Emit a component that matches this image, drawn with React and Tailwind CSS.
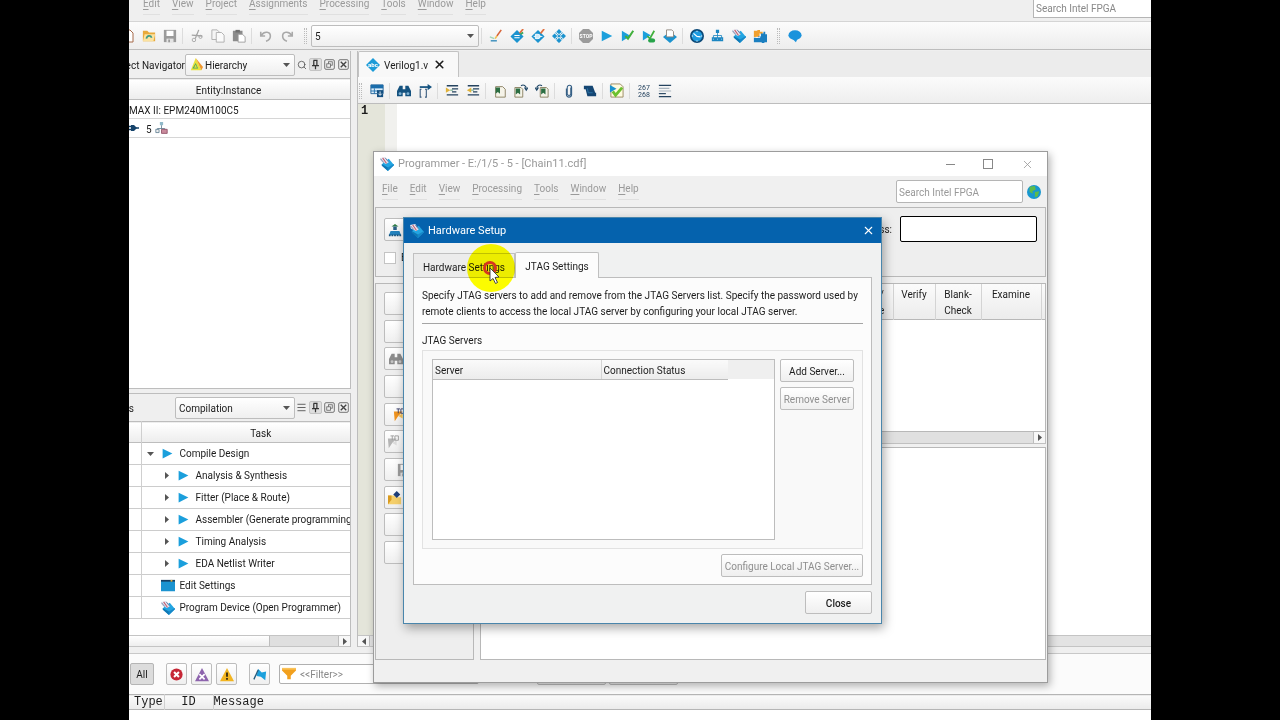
import { Menu, Search, X } from 'lucide-react';

const UI_FONT = 'font-[Roboto,"Noto_Sans",sans-serif]';
const BTN = 'rounded-xs border border-[#bdbdbd] bg-linear-to-b from-white to-[#efefef] pt-px';

/* ---------- icons ---------- */

function Svg({ children, size = 14 }) {
    return <svg width={size} height={size} viewBox="0 0 16 16" fill="none" className="shrink-0">{children}</svg>;
}

const Play = ({ size = 14 }) => <Svg size={size}><path d="M2 2 L14 8 L2 14Z" fill="#1b9fdc" /></Svg>;
const Down = () => <svg width="7" height="4" viewBox="0 0 7 4"><path d="M0 0H7L3.5 4Z" fill="#555" /></svg>;
const ArrowR = () => <svg width="4" height="7" viewBox="0 0 4 7" className="shrink-0"><path d="M0 0V7L4 3.5Z" fill="#555" /></svg>;
const ArrowL = () => <svg width="4" height="7" viewBox="0 0 4 7"><path d="M4 0V7L0 3.5Z" fill="#555" /></svg>;

const ChipLogo = ({ size = 14 }) => (
    <Svg size={size}>
        <path d="M10 2L16 9L9 16L2 9L4 6Z" fill="#23a5e2" />
        <path d="M2 8L9 12V16L2 10Z" fill="#0f78b5" />
        <path d="M9 12L16 8V9.500L9 16Z" fill="#1788c8" />
        <path d="M0 1L6 0L10 6L7 8L1 5Z" fill="#e4e8f2" />
        <path d="M3 1L7.500 7.500" stroke="#c65a6a" strokeWidth="1.200" />
        <path d="M0.500 2L4.500 6.500M6 1L9.500 5.500" stroke="#66709a" strokeWidth="1" />
    </Svg>
);
const NewDoc = () => (
    <svg width="8" height="14" viewBox="0 0 8 14"><path d="M0 1H1L4 4V13H0" fill="#fff" stroke="#a66a4a" /></svg>
);
const Open = () => (
    <Svg>
        <path d="M1 2H6L8 4H15V14H1Z" fill="#e8a93a" />
        <path d="M3 6H15L13 14H1Z" fill="#fbe2a0" />
        <path d="M5 11C6 7 10 7 11 10" stroke="#3d9a86" strokeWidth="2" />
    </Svg>
);
const Save = ({ color = '#9b9b9b' }) => (
    <Svg><path d="M1 1H15V15H1Z" fill={color} /><path d="M4 2H12V8H4Z" fill="#fff" /><path d="M4 11H12V15H4Z" fill="#e4e4e4" /><path d="M6 12H8V15H6Z" fill={color} /></Svg>
);
const Cut = () => (
    <Svg><path d="M10 1L6 11M2 7L14 8" stroke="#a4a4a4" strokeWidth="1.5" /><circle cx="4.500" cy="12.500" r="2" stroke="#a4a4a4" /><circle cx="12" cy="9" r="1.800" stroke="#a4a4a4" /></Svg>
);
const Copy = () => (
    <Svg><path d="M1 1H7L9 3V12H1Z" fill="#f5f5f5" stroke="#aaa" /><path d="M6 4H12L15 7V15H6Z" fill="#fafafa" stroke="#aaa" /></Svg>
);
const Paste = () => (
    <Svg><path d="M1 2H12V14H1Z" fill="#8b8b8b" /><path d="M4 1H9V4H4Z" fill="#6f6f6f" /><path d="M7 6H12L15 9V15H7Z" fill="#fff" stroke="#999" /></Svg>
);
const Undo = () => <Svg><path d="M2 3V8H7M3 7C6 2 13 3 13 8C13 11 11 13 8 14" stroke="#a9a9a9" strokeWidth="1.800" /></Svg>;
const Redo = () => <Svg><path d="M14 3V8H9M13 7C10 2 3 3 3 8C3 11 5 13 8 14" stroke="#a9a9a9" strokeWidth="1.800" /></Svg>;
const Pencil = () => (
    <Svg><path d="M14 1L9 8" stroke="#d8653a" strokeWidth="1.800" /><path d="M9 8L7 11" stroke="#f2c14b" strokeWidth="1.800" /><path d="M1 9L6 11" stroke="#9fd4b8" strokeWidth="1.500" /><path d="M2 13.500H9" stroke="#2c86b8" strokeWidth="1.500" /></Svg>
);
const Diamond = ({ children }) => <Svg><path d="M8 1L15.500 8.500L8 16L0.500 8.500Z" fill="#1b93cf" />{children}</Svg>;
const DiamondEq = () => (
    <Diamond><path d="M5 7.500H11M5 10H11" stroke="#fff" strokeWidth="1.200" /><path d="M15 0L11 5" stroke="#e2703f" strokeWidth="2" /><path d="M12 6L15 4" stroke="#3aa65a" strokeWidth="2" /></Diamond>
);
const DiamondGate = () => (
    <Diamond><path d="M5 6H8A2.500 2.500 0 0 1 8 11H5Z" stroke="#fff" fill="#cdeafa" /><path d="M3 8.500H5M10 8.500H13" stroke="#fff" /><path d="M15 0L11 5" stroke="#e2703f" strokeWidth="2" /></Diamond>
);
const DiamondGrid = () => (
    <Svg>
        <path d="M8 0L11 3L8 6L5 3ZM8 10L11 13L8 16L5 13ZM3 5L6 8L3 11L0 8ZM13 5L16 8L13 11L10 8ZM8 6.500L9.500 8L8 9.500L6.500 8Z" fill="#1b93cf" />
        <path d="M4 4L12 12M12 4L4 12" stroke="#1b93cf" strokeWidth="1.200" strokeDasharray="2 1" />
    </Svg>
);
const Stop = () => (
    <Svg size={16}>
        <path d="M5 1H11L15 5V11L11 15H5L1 11V5Z" fill="#9b9b9b" />
        <text x="8" y="10" textAnchor="middle" fontSize="5" fontWeight="700" fontFamily="Roboto" fill="#fff">STOP</text>
    </Svg>
);
const PlayCheck = () => <Svg><path d="M1 2L11 8L1 14Z" fill="#1b9fdc" /><path d="M5 8L8 11L14 2" stroke="#41b03c" strokeWidth="2.300" /></Svg>;
const PlayDown = () => <Svg><path d="M1 2L10 7L1 13Z" fill="#1b9fdc" /><path d="M6 8L9 11L14 2" stroke="#41b03c" strokeWidth="2" /><ellipse cx="11" cy="13" rx="4" ry="2.500" fill="#27a34a" /></Svg>;
const DocDiamond = () => (
    <Svg><path d="M0 9L8 16L16 9L12 6H4Z" fill="#1b93cf" /><path d="M4 1H10L12 3V9H4Z" fill="#fff" stroke="#8a8178" /></Svg>
);
const Clock = () => (
    <Svg><circle cx="8" cy="8" r="7" fill="#1d9be0" stroke="#0d4a78" strokeWidth="2" /><path d="M4 5L8 8.500L12 9" stroke="#fff" strokeWidth="1.300" /><path d="M8 2V3.500M8 13V14.500M2 8H3.500M12.500 8H14" stroke="#fff" /></Svg>
);
const Net = () => (
    <Svg size={13}><path d="M6 1H10V5H6ZM1 10H6V15H1ZM6 10H10V15H6ZM10 10H15V15H10Z" fill="#1b86c2" /><path d="M8 5V11M3 11V8H13V11" stroke="#1b86c2" /><path d="M3 12V13M8 12V13M13 12V13" stroke="#d8edf8" /></Svg>
);
const Puzzle = () => (
    <Svg><path d="M1 2H5V1H8V3H11V6H8V9H1Z" fill="#f0a030" /><path d="M1 10H6V8H9V5H12V3H14V6H16V15H13V16H10V15H1Z" fill="#1b7fc0" /><path d="M8 5V9.500H3" stroke="#fff" strokeWidth="1" /></Svg>
);
const Chat = () => <Svg><ellipse cx="8" cy="7" rx="7.500" ry="5.500" fill="#1b93dc" /><path d="M5 11H11L9 15Z" fill="#1b93dc" /></Svg>;

const WindowIcon = () => (
    <Svg><path d="M1 1H15V11H1Z" fill="#dceefa" stroke="#1a5d92" /><path d="M1 1H15V5H1Z" fill="#1a6dab" /><path d="M1 8H9M5 5V11" stroke="#1a6dab" /><path d="M8 7H15V15H8Z" fill="#134f80" /><path d="M11.500 8.500V12.500M9.500 11L11.500 13L13.500 11" stroke="#fff" /></Svg>
);
const Binoculars = ({ color = '#14527f', lens = '#7fb2d4' }) => (
    <Svg><path d="M3 2H6.500V6H9.500V2H13L16 8V14H9.500V10H6.500V14H0V8Z" fill={color} /><circle cx="3.500" cy="11" r="1.700" fill={lens} /><circle cx="12.500" cy="11" r="1.700" fill={lens} /></Svg>
);
const GoTo = () => <Svg><path d="M4 6H2.500V15H4M8 6H9.500V15H8" stroke="#33567a" strokeWidth="1.200" /><path d="M2 3.500H12" stroke="#14527f" strokeWidth="2" /><path d="M11 0L16 3.500L11 7Z" fill="#14527f" /></Svg>;
const Indent = ({ flip = false }) => (
    <Svg><path d="M2 2H15M8 5.500H15M8 9H13M2 12.500H15" stroke="#25435f" strokeWidth="1.500" /><path d={flip ? 'M6 4L1 7L6 10Z' : 'M1 4L6 7L1 10Z'} fill="#e0b23a" /><path d="M6 7H9" stroke="#4b9a6a" /></Svg>
);
const Bookmark = () => <Svg><path d="M3 3H11L14 6V15H3Z" fill="#f5f3e8" stroke="#857a5a" /><path d="M3 4H8V11L5.500 9L3 11Z" fill="#2c6e42" /></Svg>;
const BookmarkTurn = ({ flip = false }) => (
    <Svg>
        <g transform={flip ? 'translate(5 0)' : undefined}><path d="M1 4H8L10 6V15H1Z" fill="#f5f3e8" stroke="#857a5a" /><path d="M2 5H7V12L4.500 10L2 12Z" fill="#2c6e42" /></g>
        <path d={flip ? 'M8 2C5 0 2 2 2 5M0 4L2 7L4 4' : 'M8 2C11 0 14 2 14 5M12 4L14 7L16 4'} stroke="#1f4767" strokeWidth="1.300" />
    </Svg>
);
const Clip = () => <Svg><path d="M10 4V11A2 2 0 0 1 6 11V4A2.500 2.500 0 0 1 11 4V12A3 3 0 0 1 5 12V5" stroke="#355f85" strokeWidth="1.200" /></Svg>;
const Scroll = () => <Svg><path d="M1 2H11L14 10H15V14H5L3 6H1Z" fill="#154673" /><path d="M5 5L6 10H11" stroke="#2d78ad" /></Svg>;
const CheckDoc = () => <Svg size={15}><path d="M2 1H12L15 4V15H2Z" fill="#fffbe0" stroke="#9a8a62" /><path d="M1 2L8 6L1 10Z" fill="#1b93cf" /><path d="M4 9L7 13L14 5" stroke="#6cc12e" strokeWidth="3" /></Svg>;
const Lines = () => <Svg><path d="M1 1.500H15M1 14.500H15" stroke="#25435f" strokeWidth="1.500" /><path d="M1 5H13M1 8H15" stroke="#a9b5bf" strokeWidth="1.300" /><path d="M1 11H9" stroke="#25435f" strokeWidth="1.300" /></Svg>;
const LineNumbers = () => (
    <Svg size={16}>
        <g fontFamily="Roboto" fontSize="7" fill="#25435f" textAnchor="middle"><text x="8" y="7">267</text><text x="8" y="14">268</text></g>
    </Svg>
);
const Abc = () => (
    <Svg><path d="M8 0L16 8L8 16L0 8Z" fill="#1b9bd8" /><text x="8" y="10" textAnchor="middle" fontSize="7" fontWeight="700" fontFamily="Roboto" fill="#fff">abc</text></Svg>
);
const Triangle = () => <Svg size={13}><path d="M7 0L14 15H1Z" fill="#e7e23c" /><path d="M7 0L16 11L14 15Z" fill="#f0962c" /><path d="M7 6L10 13H3Z" fill="#4aa564" /><path d="M7 8L8.500 12H5Z" fill="#e7e23c" /></Svg>;
const PinIcon = () => <Svg size={11}><path d="M5 2H11M5.500 2V9M10 2V9M3 9.500H13M8 10V15" stroke="#333" strokeWidth="1.800" /></Svg>;
const Restore = () => <Svg size={11}><rect x="1" y="1" width="14" height="14" rx="2" stroke="#666" strokeWidth="1.300" /><rect x="6.500" y="4" width="5.500" height="5" stroke="#666" strokeWidth="1.200" /><rect x="4" y="7" width="5.500" height="5" fill="#eee" stroke="#666" strokeWidth="1.200" /></Svg>;
const BoxX = () => <Svg size={11}><rect x="1" y="1" width="14" height="14" rx="2" stroke="#666" strokeWidth="1.300" /><path d="M4 4L12 12M12 4L4 12" stroke="#444" strokeWidth="2" /></Svg>;
const Hier = () => <Svg size={13}><path d="M6 0H10V4H6Z" fill="#8fb9c9" /><path d="M8 4V8M3 10V8H12V10" stroke="#5c7d90" /><path d="M1 9H5V13H1Z" fill="#eee" stroke="#5c7d90" /><path d="M8 9H15V14H8Z" fill="#c98a9c" stroke="#8a4a60" /></Svg>;
const Plug = () => <svg width="10" height="8" viewBox="0 0 10 8"><path d="M0 2.500H3M0 5.500H3M7 4H10" stroke="#15436b" strokeWidth="1.500" /><path d="M2 1H5L8 4L5 7H2Z" fill="#15436b" /></svg>;
const EditWin = () => <Svg><path d="M0 2H16V14H0Z" fill="#1b93d0" /><path d="M0 1H16V3H0Z" fill="#163f63" /><path d="M11 1H13V3H11Z" fill="#e9b33c" /></Svg>;
const ErrorIcon = () => <Svg size={13}><circle cx="8" cy="8" r="7.500" fill="#c62736" /><path d="M5 5L11 11M11 5L5 11" stroke="#fff" strokeWidth="2.500" /></Svg>;
const CritIcon = () => <Svg><path d="M8 0L16 15H0Z" fill="#8d63ad" /><path d="M5 7L11 13M11 7L5 13" stroke="#fff" strokeWidth="2" /></Svg>;
const WarnIcon = () => <Svg><path d="M8 0L16 15H0Z" fill="#f2b41f" /><path d="M8 5V10M8 11.500V13.500" stroke="#2d2410" strokeWidth="2" /></Svg>;
const FlagIcon = () => <Svg><path d="M6 1L10 5L15 4L14 14L9 10L4 9Z" fill="#1ba0dc" /><path d="M6 2L1 13" stroke="#235a7d" strokeWidth="1.500" /></Svg>;
const Funnel = () => <Svg><path d="M0 1H16V4L10 10V14H6V10L0 4Z" fill="#f2a01e" /><path d="M0 1H16V3H0Z" fill="#fac257" /></Svg>;
const Globe = () => <Svg size={14}><circle cx="8" cy="8" r="8" fill="#1897cf" /><path d="M3 2L9 1L10 5L6 7L7 10L3 8ZM9 8L14 7L12 13L9 14Z" fill="#5dbb4a" /></Svg>;
const Person = () => <Svg><path d="M8 1L12 4H4Z" fill="#2f7d46" /><path d="M6 4H10V8H6Z" fill="#2b5f86" /><path d="M1 14L3 9H13L15 14Z" fill="#2382bd" /><path d="M1 14H15" stroke="#15527d" strokeWidth="2" strokeDasharray="2 1" /></Svg>;
const FlagFile = ({ off = false }) => (
    <Svg><path d="M1 4L11 4L6 9L2 15Z" fill={off ? '#b5b5b5' : '#f0941f'} /><path d="M6 9L11 6V12Z" fill={off ? '#ddd' : '#f8c559'} /><path d="M4 1H8M6 1V6M9 1V6H13V1Z" stroke={off ? '#999' : '#333a68'} /></Svg>
);
const AddFile = () => <Svg><path d="M0 5H7L9 7H15V15H0Z" fill="#f5cf6a" /><path d="M0 5H4V10L0 15Z" fill="#d99a1f" /><path d="M10 0L14 4L10 8L6 4Z" fill="#1e3f7a" /></Svg>;

/* ---------- small parts ---------- */

const Tool = ({ label, children }) => (
    <button aria-label={label} className="flex h-5 w-[21px] shrink-0 items-center justify-center">{children}</button>
);
const Sep = () => <div className="mr-[3px] ml-0.5 h-4 w-px shrink-0 bg-[#dcdcdc]" />;
const Grip = () => <div className="mr-1 ml-[7px] h-4 w-[3px] shrink-0 border-x border-dotted border-[#bbb]" />;

function MenuBar({ items }) {
    return (
        <nav className="flex gap-3 text-[#9a9a9a]">
            {items.map(item => (
                <button key={item} className="border-b border-[#e0e0e0] pb-0.5 leading-4">
                    <span className="underline underline-offset-2">{item[0]}</span>{item.slice(1)}
                </button>
            ))}
        </nav>
    );
}

function Combo({ label, value, icon, className }) {
    return (
        <div className={`relative flex h-[22px] shrink-0 items-center ${className}`}>
            <select aria-label={label} className={`size-full appearance-none ${BTN} ${icon ? 'pl-[19px]' : 'pl-[3px]'}`}>
                <option>{value}</option>
            </select>
            {icon && <span className="pointer-events-none absolute left-[5px]">{icon}</span>}
            <span className="pointer-events-none absolute right-[5px]"><Down /></span>
        </div>
    );
}

function PanelButtons({ first }) {
    return (
        <div className="flex shrink-0 items-center gap-px">
            <button aria-label="Options" className="flex size-[13px] items-center justify-center text-[#555]">{first}</button>
            <button aria-label="Pin" className="flex size-[13px] items-center justify-center rounded-xs border border-[#c4c4c4] bg-[#dedede]"><PinIcon /></button>
            <button aria-label="Float" className="flex size-[13px] items-center justify-center"><Restore /></button>
            <button aria-label="Close panel" className="flex size-[13px] items-center justify-center"><BoxX /></button>
        </div>
    );
}

/* ---------- main window ---------- */

function MainToolbar() {
    return (
        <div className="flex h-[29px] shrink-0 items-center overflow-hidden border-y border-t-[#d5d5d5] border-b-[#bdbdbd] bg-linear-to-b from-[#fcfcfc] to-[#ededed]">
            <button aria-label="New" className="w-[9px] shrink-0"><NewDoc /></button>
            <Tool label="Open"><Open /></Tool>
            <Tool label="Save"><Save /></Tool>
            <Sep />
            <Tool label="Cut"><Cut /></Tool>
            <Tool label="Copy"><Copy /></Tool>
            <Tool label="Paste"><Paste /></Tool>
            <Sep />
            <Tool label="Undo"><Undo /></Tool>
            <Tool label="Redo"><Redo /></Tool>
            <Grip />
            <Combo label="Revision" value="5" className="w-[168px]" />
            <Sep />
            <Tool label="Assignment editor"><Pencil /></Tool>
            <Tool label="Settings"><DiamondEq /></Tool>
            <Tool label="Pin planner"><DiamondGate /></Tool>
            <Tool label="Chip planner"><DiamondGrid /></Tool>
            <Sep />
            <Tool label="Stop"><Stop /></Tool>
            <Tool label="Start compilation"><Play /></Tool>
            <Tool label="Start analysis"><PlayCheck /></Tool>
            <Tool label="Start fitter"><PlayDown /></Tool>
            <Tool label="Report"><DocDiamond /></Tool>
            <Sep />
            <Tool label="Timing analyzer"><Clock /></Tool>
            <Tool label="Netlist viewer"><Net /></Tool>
            <Tool label="Programmer"><ChipLogo /></Tool>
            <Tool label="Platform designer"><Puzzle /></Tool>
            <Grip />
            <Tool label="Feedback"><Chat /></Tool>
        </div>
    );
}

function ProjectNavigator() {
    return (
        <section className="flex h-[338px] shrink-0 flex-col border-r border-b border-[#bdbdbd]">
            <div className="flex h-[27px] shrink-0 items-center">
                <div className="flex min-w-0 flex-1 justify-end overflow-hidden pt-0.5 whitespace-nowrap">Project Navigator</div>
                <Combo label="View" value="Hierarchy" icon={<Triangle />} className="w-[110px]" />
                <PanelButtons first={<Search size={10} />} />
            </div>
            <div className="flex-1 bg-white">
                <table className="w-full border-collapse">
                    <thead>
                        <tr className="h-[21px] border-y border-[#bdbdbd] bg-linear-to-b from-white to-[#ededed]">
                            <th className="pt-0.5 pr-[22px] font-normal">Entity:Instance</th>
                        </tr>
                    </thead>
                    <tbody>
                        <tr className="h-[19px] border-b border-[#d6d6d6]"><td className="pt-0.5">MAX II: EPM240M100C5</td></tr>
                        <tr className="h-[19px] border-b border-[#d6d6d6]">
                            <td><div className="flex items-center"><Plug /><span className="pt-0.5 pr-[3px] pl-[7px]">5</span><Hier /></div></td>
                        </tr>
                    </tbody>
                </table>
            </div>
        </section>
    );
}

const tasks = [
    { name: 'Compile Design', level: 0, open: true },
    { name: 'Analysis & Synthesis', level: 1 },
    { name: 'Fitter (Place & Route)', level: 1 },
    { name: 'Assembler (Generate programming', level: 1 },
    { name: 'Timing Analysis', level: 1 },
    { name: 'EDA Netlist Writer', level: 1 },
    { name: 'Edit Settings', level: 0, icon: <EditWin /> },
    { name: 'Program Device (Open Programmer)', level: 0, icon: <ChipLogo /> },
];

function Tasks() {
    return (
        <section className="flex min-h-0 flex-1 flex-col border-t border-r border-[#bdbdbd]">
            <div className="flex h-[27px] shrink-0 items-center">
                <div className="flex min-w-0 flex-1 justify-end overflow-hidden pt-0.5 pr-[41px] whitespace-nowrap">Tasks</div>
                <Combo label="Flow" value="Compilation" className="w-[120px]" />
                <PanelButtons first={<Menu size={11} />} />
            </div>
            <div className="min-h-0 flex-1 overflow-hidden bg-white">
                <table className="w-full table-fixed border-collapse">
                    <thead>
                        <tr className="h-[21px] border-y border-[#bdbdbd] bg-linear-to-b from-white to-[#ededed]">
                            <th className="w-3 border-r border-[#cfcfcf]" aria-label="Status" />
                            <th className="pt-0.5 pl-[30px] font-normal">Task</th>
                        </tr>
                    </thead>
                    <tbody>
                        {tasks.map(t => (
                            <tr key={t.name} className="h-[22px] border-b border-[#cccccc]">
                                <td className="border-r border-[#cfcfcf]" />
                                <td className="overflow-hidden whitespace-nowrap">
                                    <div className={`flex items-center ${t.level ? 'pl-[23px]' : 'pl-[5px]'}`}>
                                        <span className={t.level ? 'w-3 shrink-0' : 'w-[14px] shrink-0'}>{t.open ? <Down /> : t.level ? <ArrowR /> : null}</span>
                                        {t.icon || <Play size={13} />}
                                        <span className={t.icon ? 'pl-[5px]' : 'pl-[6px]'}>{t.name}</span>
                                    </div>
                                </td>
                            </tr>
                        ))}
                    </tbody>
                </table>
            </div>
            <div className="flex h-3 shrink-0 border-y border-[#c4c4c4] bg-[#dfdfdf]">
                <div className="w-[141px] border-r border-[#bdbdbd] bg-linear-to-b from-white to-[#eeeeee]" />
                <div className="flex-1" />
                <button aria-label="Scroll right" className="flex w-3 items-center justify-center border-l border-[#bdbdbd] bg-[#f7f7f7]"><ArrowR /></button>
            </div>
        </section>
    );
}

function Editor() {
    return (
        <section className="flex min-w-0 flex-1 flex-col border-l border-[#bdbdbd]">
            <div className="flex h-[26px] shrink-0 bg-[#ececec]">
                <div className="flex w-[101px] items-center gap-1 rounded-t-xs border border-b-0 border-[#c2c2c2] bg-[#f8f8f8] pl-[7px]">
                    <Abc /><span className="pt-0.5">Verilog1.v</span>
                    <button aria-label="Close tab" className="ml-px"><X size={13} strokeWidth={3} /></button>
                </div>
            </div>
            <div className="flex h-[27px] shrink-0 items-center border-b border-[#bdbdbd] bg-linear-to-b from-[#fbfbfb] to-[#eeeeee] pt-px">
                <div className="mr-1 ml-px h-4 w-[3px] border-x border-dotted border-[#bbb]" />
                <Tool label="Detach window"><WindowIcon /></Tool>
                <Sep />
                <Tool label="Find"><Binoculars /></Tool>
                <Tool label="Go to"><GoTo /></Tool>
                <Sep />
                <Tool label="Increase indent"><Indent /></Tool>
                <Tool label="Decrease indent"><Indent flip /></Tool>
                <Sep />
                <Tool label="Toggle bookmark"><Bookmark /></Tool>
                <Tool label="Next bookmark"><BookmarkTurn /></Tool>
                <Tool label="Previous bookmark"><BookmarkTurn flip /></Tool>
                <Sep />
                <Tool label="Insert file"><Clip /></Tool>
                <Tool label="Insert template"><Scroll /></Tool>
                <Sep />
                <Tool label="Analyze file"><CheckDoc /></Tool>
                <Sep />
                <Tool label="Line numbers"><LineNumbers /></Tool>
                <Tool label="Wrap lines"><Lines /></Tool>
            </div>
            <div className="flex min-h-0 flex-1 bg-white">
                <div className="w-[27px] bg-[#e4e5da] pl-[3px] font-['Liberation_Mono',monospace] text-xs leading-[14px] font-bold">1</div>
                <div className="w-3 bg-[#f1f1ee]" />
            </div>
            <div className="flex h-3 shrink-0 border-y border-[#c4c4c4] bg-[#e3e3e3]">
                <button aria-label="Scroll left" className="flex w-3 items-center justify-center border-r border-[#bdbdbd] bg-[#f7f7f7]"><ArrowL /></button>
            </div>
        </section>
    );
}

function Messages() {
    const filters = [['Errors', <ErrorIcon />], ['Critical warnings', <CritIcon />], ['Warnings', <WarnIcon />]];
    return (
        <section className="flex h-[67px] shrink-0 flex-col border-t border-[#c8c8c8] bg-[#fbfbfb]">
            <div className="flex h-10 shrink-0 items-center pl-px">
                <button className="mr-3 h-[22px] w-6 rounded-xs border border-[#b5b5b5] bg-[#dcdcdc] pt-px">All</button>
                <div className="flex gap-1">
                    {filters.map(([label, icon]) => (
                        <button key={label} aria-label={label} className={`flex h-[22px] w-[21px] items-center justify-center ${BTN}`}>{icon}</button>
                    ))}
                </div>
                <button aria-label="Flagged" className={`mr-[9px] ml-3 flex h-[22px] w-[21px] items-center justify-center ${BTN}`}><FlagIcon /></button>
                <div className="flex h-5 w-[200px] items-center gap-1 rounded-xs border border-[#b0b0b0] bg-white pl-0.5">
                    <Funnel />
                    <input aria-label="Filter" placeholder="<<Filter>>" className="min-w-0 flex-1 outline-none placeholder:text-[#888]" />
                </div>
                <button aria-label="Find" className={`mr-[3px] ml-[58px] h-[22px] w-[69px] ${BTN}`} />
                <button aria-label="Find next" className={`h-[22px] w-[69px] ${BTN}`} />
            </div>
            <table className="w-full table-fixed border-collapse font-['Liberation_Mono',monospace] text-xs">
                <thead>
                    <tr className="h-[15px] border-y border-[#b5b5b5] bg-linear-to-b from-[#fafafa] to-[#ebebeb] text-left leading-[13px]">
                        <th className="w-[35px] border-r border-[#d0d0d0] pl-[5px] font-normal">Type</th>
                        <th className="w-[49px] border-r border-[#d0d0d0] text-center font-normal">ID</th>
                        <th className="font-normal">Message</th>
                    </tr>
                </thead>
            </table>
            <div className="flex-1 bg-white" />
        </section>
    );
}

/* ---------- programmer window ---------- */

const sideButtons = [
    { label: 'Start' },
    { label: 'Stop' },
    { label: 'Auto Detect', icon: <Binoculars color="#8c8c8c" lens="#c4c4c4" />, pad: 'pl-1' },
    { label: 'Delete' },
    { label: 'Add File', icon: <FlagFile />, pad: 'pl-2' },
    { label: 'Change File', icon: <FlagFile off />, pad: 'pl-0.5' },
    { label: 'Save File', icon: <Save />, pad: 'pl-3' },
    { label: 'Add Device', icon: <AddFile />, pad: 'pl-[3px]' },
    { label: 'Up' },
    { label: 'Down' },
];

function Programmer() {
    return (
        <div className="absolute top-[151px] right-[103px] left-[244px] flex h-[532px] flex-col border border-[#9c9c9c] bg-[#f0f0f0] shadow-[2px_3px_8px_rgba(0,0,0,0.3)]">
            <div className="flex h-6 shrink-0 items-center gap-1 bg-white pl-[6px] text-[11px] text-[#999]">
                <ChipLogo />
                <span className="pt-px">Programmer - E:/1/5 - 5 - [Chain11.cdf]</span>
                <div className="ml-auto flex items-center gap-7 pr-[13px]">
                    <button aria-label="Minimize" className="h-px w-[9px] bg-[#888]" />
                    <button aria-label="Maximize" className="size-[10px] border border-[#888]" />
                    <button aria-label="Close programmer"><X size={13} strokeWidth={1.5} /></button>
                </div>
            </div>
            <div className="flex h-[31px] shrink-0 items-center pr-[6px] pl-2">
                <div className="pb-0.5">
                    <MenuBar items={['File', 'Edit', 'View', 'Processing', 'Tools', 'Window', 'Help']} />
                </div>
                <input aria-label="Search" placeholder="Search Intel FPGA" className="mr-1 ml-auto h-[23px] w-[127px] rounded-xs border border-[#b5b5b5] bg-white pt-px pl-0.5 placeholder:text-[#999]" />
                <Globe />
            </div>
            <div className="mx-px flex h-[70px] shrink-0 justify-between border border-[#b8b8b8] bg-[#eeeeee] px-2 pt-2">
                <div className="flex flex-col gap-[9px] pt-0.5">
                    <button aria-label="Hardware setup" className={`flex h-[23px] w-24 items-center pl-[3px] ${BTN}`}><Person /></button>
                    <label className="flex items-center gap-[5px]">
                        <input type="checkbox" className="size-3 appearance-none border border-[#c4c4c4] bg-white" />
                        Enable ISP
                    </label>
                </div>
                <label className="flex h-[26px] items-center gap-2">
                    Progress:
                    <input className="h-[26px] w-[137px] rounded-xs border border-black bg-white" />
                </label>
            </div>
            <div className="mx-px mt-[6px] flex min-h-0 flex-1 gap-[6px]">
                <div className="w-[99px] shrink-0 border border-[#b8b8b8] bg-[#eeeeee] pt-2 pl-2">
                    <div className="flex h-[272px] flex-col justify-between">
                        {sideButtons.map(b => (
                            <button key={b.label} aria-label={b.label} className={`flex h-[23px] w-[84px] shrink-0 items-center ${BTN} ${b.pad || ''}`}>{b.icon}</button>
                        ))}
                    </div>
                </div>
                <div className="flex min-w-0 flex-1 flex-col">
                    <div className="flex h-[149px] flex-col border border-[#b8b8b8] bg-white">
                        <table className="w-full table-fixed border-collapse">
                            <thead>
                                <tr className="h-[35px] border-b border-[#b8b8b8] bg-linear-to-b from-[#fbfbfb] to-[#ececec] align-top leading-4">
                                    <th aria-label="File" />
                                    <th className="w-[60px] border-r border-[#d4d4d4] pt-[3px] font-normal">Program/<br />Configure</th>
                                    <th className="w-[42px] border-r border-[#d4d4d4] pt-[3px] font-normal">Verify</th>
                                    <th className="w-[46px] border-r border-[#d4d4d4] pt-[3px] font-normal">Blank-<br />Check</th>
                                    <th className="w-[60px] border-r border-[#d4d4d4] pt-[3px] font-normal">Examine</th>
                                    <th className="w-1" aria-label="More" />
                                </tr>
                            </thead>
                        </table>
                    </div>
                    <div className="flex h-3 shrink-0 justify-end border border-t-0 border-[#c0c0c0] bg-[#e0e0e0]">
                        <button aria-label="Scroll right" className="flex w-3 items-center justify-center border-l border-[#bdbdbd] bg-[#f7f7f7]"><ArrowR /></button>
                    </div>
                    <div className="mt-[3px] flex-1 border border-[#b8b8b8] bg-white" />
                </div>
            </div>
            <div className="h-[22px] shrink-0" />
        </div>
    );
}

/* ---------- hardware setup dialog ---------- */

function HardwareSetup() {
    const head = 'border-b border-b-[#bdbdbd] bg-linear-to-b from-[#fafafa] to-[#ececec] pt-0.5 pl-0.5 font-normal';
    return (
        <div role="dialog" aria-label="Hardware Setup" className="absolute top-[217px] right-[269px] left-[274px] border border-[#4a86ac] bg-[#f0f1f1] shadow-[2px_4px_10px_rgba(0,0,0,0.35)]">
            <div className="flex h-[25px] items-center gap-1 bg-[#0562ad] px-[6px] text-[11px] text-white">
                <ChipLogo />
                <span className="pt-px">Hardware Setup</span>
                <button aria-label="Close dialog" className="ml-auto"><X size={13} strokeWidth={2} /></button>
            </div>
            <div className="p-[9px]">
                <div role="tablist" className="flex items-end">
                    <button role="tab" aria-selected="false" className="h-6 w-[102px] border border-b-0 border-[#c0c0c0] bg-[#ececec] pt-1">Hardware Settings</button>
                    <button role="tab" aria-selected="true" className="-mb-px h-[26px] w-[84px] rounded-t-xs border border-b-0 border-[#c0c0c0] bg-[#fcfcfc] pt-0.5">JTAG Settings</button>
                </div>
                <div className="border border-[#bdbdbd] bg-[#fcfcfc] px-2 pt-[10px] pb-[7px]">
                    <p className="border-b border-[#a5a5a5] pb-[3px] leading-4">
                        Specify JTAG servers to add and remove from the JTAG Servers list. Specify the password used by remote clients to access the local JTAG server by configuring your local JTAG server.
                    </p>
                    <h2 className="mt-[9px] mb-px leading-4">JTAG Servers</h2>
                    <div className="flex gap-[5px] border border-[#e2e2e2] bg-[#f9f9f9] py-2 pr-2 pl-[9px]">
                        <div className="h-[181px] flex-1 border border-[#bdbdbd] bg-white">
                            <table className="w-full table-fixed border-collapse">
                                <thead>
                                    <tr className="h-[19px] bg-[#efefef] text-left">
                                        <th className={`w-[168px] border-r border-r-[#d4d4d4] ${head}`}>Server</th>
                                        <th className={`w-[127px] ${head}`}>Connection Status</th>
                                        <th aria-label="Empty" />
                                    </tr>
                                </thead>
                            </table>
                        </div>
                        <div className="flex w-[74px] flex-col gap-[5px]">
                            <button className={`h-[23px] ${BTN}`}>Add Server...</button>
                            <button disabled className={`h-[23px] whitespace-nowrap text-[#8f8f8f] ${BTN}`}>Remove Server</button>
                        </div>
                    </div>
                    <div className="mt-[5px] flex justify-end">
                        <button disabled className={`h-[23px] w-[142px] whitespace-nowrap text-[#8f8f8f] ${BTN}`}>Configure Local JTAG Server...</button>
                    </div>
                </div>
                <div className="mt-[6px] flex justify-end">
                    <button className={`h-[23px] w-[67px] font-medium ${BTN}`}>Close</button>
                </div>
            </div>
        </div>
    );
}

/* click highlight sits under the cursor and lets the tab label show through */
function Pointer() {
    return (
        <>
            <div className="pointer-events-none absolute top-[244px] left-[338px] size-12 rounded-full bg-[#ffff00] mix-blend-multiply" />
            <svg width="48" height="48" viewBox="0 0 48 48" className="pointer-events-none absolute top-[244px] left-[338px]">
                <circle cx="23" cy="24" r="5.500" fill="none" stroke="#d6361f" strokeWidth="3" />
                <path d="M23 24V37L26 34.500L28.500 39.500L30.500 38.500L28 33.500L32 33Z" fill="#fff" stroke="#333" strokeWidth="0.900" />
            </svg>
        </>
    );
}

export default function App() {
    return (
        <div className="h-screen bg-black px-[129px]">
            <main className={`relative isolate flex h-full flex-col overflow-hidden bg-[#efefef] text-[10px] text-[#1c1c1c] ${UI_FONT}`}>
                <div className="flex h-[21px] shrink-0 items-start justify-between overflow-hidden pl-[14px]">
                    <div className="-mt-1"><MenuBar items={['Edit', 'View', 'Project', 'Assignments', 'Processing', 'Tools', 'Window', 'Help']} /></div>
                    <input aria-label="Search" placeholder="Search Intel FPGA" className="h-[18px] w-[118px] border border-t-0 border-r-0 border-[#b5b5b5] bg-white pl-0.5 placeholder:text-[#888]" />
                </div>
                <MainToolbar />
                <div className="flex min-h-0 flex-1 gap-[6px] pt-px">
                    <div className="flex w-[222px] shrink-0 flex-col gap-1">
                        <ProjectNavigator />
                        <Tasks />
                    </div>
                    <Editor />
                </div>
                <div className="h-[6px] shrink-0" />
                <Messages />
                <Programmer />
                <HardwareSetup />
                <Pointer />
            </main>
        </div>
    );
}
